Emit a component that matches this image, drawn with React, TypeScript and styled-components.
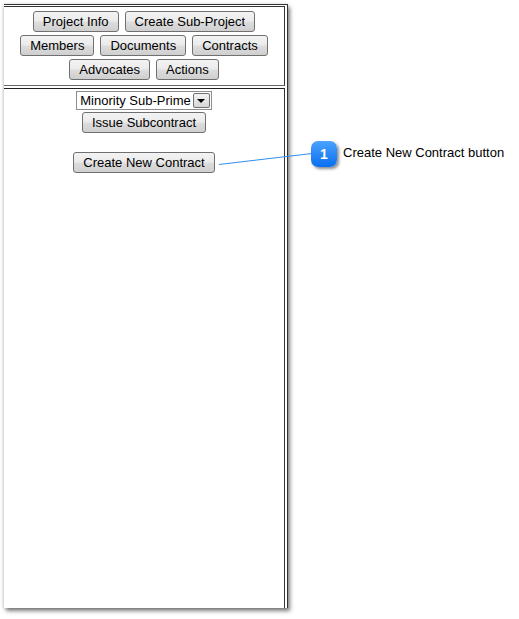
import styled, { createGlobalStyle } from 'styled-components';

const GlobalStyle = createGlobalStyle`
  html, body {
    margin: 0;
    padding: 0;
    background: #ffffff;
  }
  body {
    font-family: "Liberation Sans", Arial, sans-serif;
    font-size: 13px;
    color: #000;
  }
`;

const Page = styled.div`
  position: relative;
  width: 519px;
  height: 619px;
  padding: 4px 0 0 4px;
  box-sizing: border-box;
`;

const Frame = styled.div`
  box-sizing: border-box;
  width: 284px;
  height: 604px;
  background: #fff;
  border-top: 1px solid #333;
  border-right: 1px solid #333;
  padding: 1px 2px 0 0;
  display: flex;
  flex-direction: column;
  gap: 2px;
  box-shadow: 2px 3px 4px rgba(0, 0, 0, 0.5), -1px 0 3px rgba(0, 0, 0, 0.15);
`;

const NavPane = styled.div`
  border-top: 1px solid #333;
  border-right: 1px solid #333;
  border-bottom: 1px solid #6a6a6a;
  padding: 4px 0 5px;
  display: flex;
  flex-direction: column;
  align-items: center;
  gap: 3px;
`;

const NavRow = styled.div`
  display: flex;
  justify-content: center;
  gap: 6px;
`;

const ContentPane = styled.div`
  flex: 1;
  border-top: 1px solid #222;
  border-right: 1px solid #333;
  padding-top: 2px;
  display: flex;
  flex-direction: column;
  align-items: center;
`;

const Button = styled.button<{ $gap?: number }>`
  box-sizing: border-box;
  height: 21px;
  margin-top: ${(p) => p.$gap ?? 0}px;
  padding: 0 9px;
  border: 1px solid #707070;
  border-radius: 3px;
  background: linear-gradient(#f3f3f3 0%, #ebebeb 48%, #dddddd 52%, #cfcfcf 100%);
  font-family: "Liberation Sans", Arial, sans-serif;
  font-size: 13px;
  line-height: 19px;
  color: #000;
  white-space: nowrap;
  cursor: pointer;
`;

const SelectBox = styled.div`
  box-sizing: border-box;
  height: 19px;
  display: flex;
  align-items: center;
  padding: 0 1px 0 3px;
  border: 1px solid #8e8e8e;
  background: #fff;
  font-size: 13px;
`;

const SelectText = styled.span`
  line-height: 17px;
  margin-right: 2px;
`;

const SelectArrow = styled.span`
  box-sizing: border-box;
  width: 17px;
  height: 15px;
  border: 1px solid #707070;
  border-radius: 2px;
  background: linear-gradient(#f4f4f4, #d6d6d6);
  display: flex;
  align-items: center;
  justify-content: center;

  &::after {
    content: '';
    border-left: 4px solid transparent;
    border-right: 4px solid transparent;
    border-top: 4px solid #000;
  }
`;

const CalloutLine = styled.svg`
  position: absolute;
  left: 0;
  top: 0;
  pointer-events: none;
`;

const Badge = styled.div`
  position: absolute;
  left: 311px;
  top: 141px;
  width: 26px;
  height: 26px;
  border-radius: 7px;
  background: linear-gradient(#4aa3ff, #0a6ff0);
  box-shadow: 2px 2px 3px rgba(0, 0, 0, 0.45);
  color: #fff;
  font-weight: bold;
  font-size: 14px;
  display: flex;
  align-items: center;
  justify-content: center;
`;

const CalloutLabel = styled.div`
  position: absolute;
  left: 343px;
  top: 145px;
  font-size: 13px;
  line-height: 15px;
  white-space: nowrap;
`;

export default function App() {
  return (
    <Page>
      <GlobalStyle />
      <Frame>
        <NavPane>
          <NavRow>
            <Button type="button">Project Info</Button>
            <Button type="button">Create Sub-Project</Button>
          </NavRow>
          <NavRow>
            <Button type="button">Members</Button>
            <Button type="button">Documents</Button>
            <Button type="button">Contracts</Button>
          </NavRow>
          <NavRow>
            <Button type="button">Advocates</Button>
            <Button type="button">Actions</Button>
          </NavRow>
        </NavPane>
        <ContentPane>
          <SelectBox>
            <SelectText>Minority Sub-Prime</SelectText>
            <SelectArrow />
          </SelectBox>
          <Button type="button" $gap={2}>Issue Subcontract</Button>
          <Button type="button" $gap={19}>Create New Contract</Button>
        </ContentPane>
      </Frame>

      <CalloutLine width="519" height="619">
        <line x1="219" y1="164.5" x2="312" y2="153.5" stroke="#2f8ff0" strokeWidth="1" />
      </CalloutLine>
      <Badge>1</Badge>
      <CalloutLabel>Create New Contract button</CalloutLabel>
    </Page>
  );
}
